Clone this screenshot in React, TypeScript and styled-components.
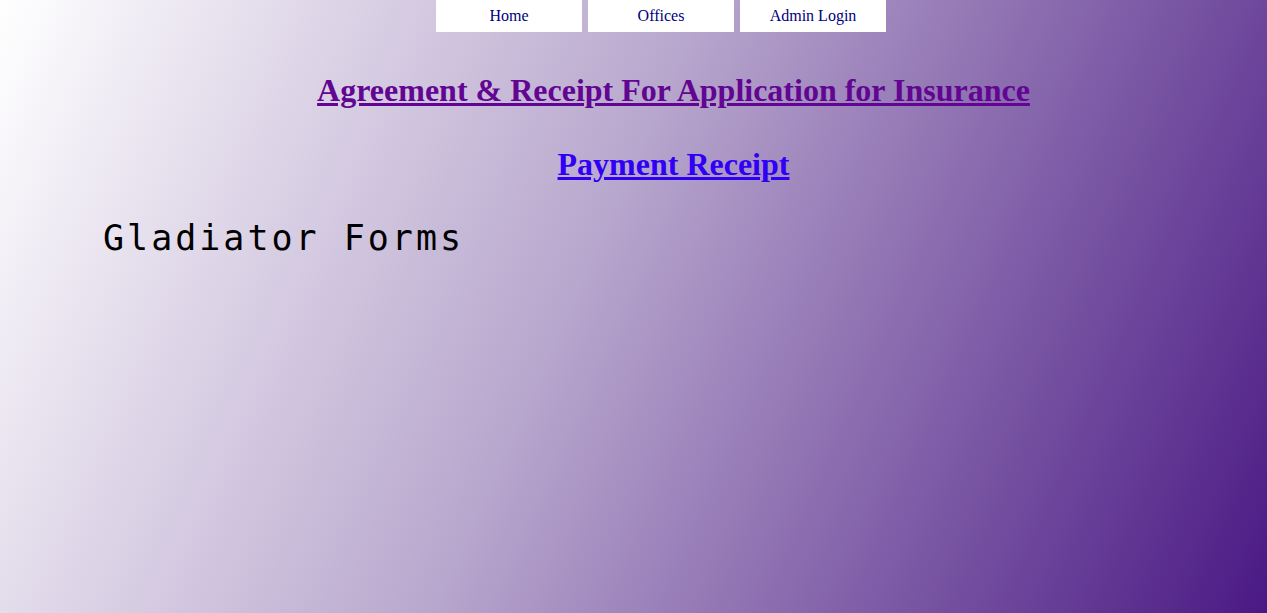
import React from "react";
import styled, { createGlobalStyle } from "styled-components";

const GlobalStyle = createGlobalStyle`
  html, body {
    margin: 0;
    padding: 0;
    height: 100%;
  }
  body {
    font-family: "Liberation Serif", "Times New Roman", serif;
  }
`;

const Page = styled.div`
  min-height: 100vh;
  box-sizing: border-box;
  background: linear-gradient(114deg, #ffffff 0%, #b9a8ce 45%, #4a1984 100%);
  display: flex;
  flex-direction: column;
`;

const Nav = styled.nav`
  display: flex;
  justify-content: center;
  gap: 6px;
  padding-left: 55px;
`;

const NavItem = styled.a`
  width: 146px;
  height: 32px;
  background: #ffffff;
  color: #000080;
  font-family: "Liberation Serif", "Times New Roman", serif;
  font-size: 16px;
  display: flex;
  align-items: center;
  justify-content: center;
  text-decoration: none;
  padding-bottom: 1px;
  box-sizing: border-box;
`;

const Links = styled.section`
  display: flex;
  flex-direction: column;
  align-items: center;
  padding-left: 80px;
  margin-top: 40px;
  gap: 37px;
`;

const Heading = styled.h1`
  margin: 0;
  font-family: "Liberation Serif", "Times New Roman", serif;
  font-size: 32px;
  font-weight: bold;
  line-height: 37px;
`;

const HeadingLink = styled.a<{ $color: string }>`
  color: ${(p) => p.$color};
  text-decoration: underline;
`;

const Title = styled.div`
  margin-top: 35px;
  padding-left: 103px;
  font-family: "DejaVu Sans Mono", monospace;
  font-size: 35px;
  letter-spacing: 3px;
  color: #000000;
  line-height: normal;
`;

export default function App() {
  return (
    <>
      <GlobalStyle />
      <Page>
        <Nav>
          <NavItem href="#">Home</NavItem>
          <NavItem href="#">Offices</NavItem>
          <NavItem href="#">Admin Login</NavItem>
        </Nav>
        <Links>
          <Heading>
            <HeadingLink href="#" $color="#620592">
              Agreement &amp; Receipt For Application for Insurance
            </HeadingLink>
          </Heading>
          <Heading>
            <HeadingLink href="#" $color="#3000f5">
              Payment Receipt
            </HeadingLink>
          </Heading>
        </Links>
        <Title>Gladiator Forms</Title>
      </Page>
    </>
  );
}
